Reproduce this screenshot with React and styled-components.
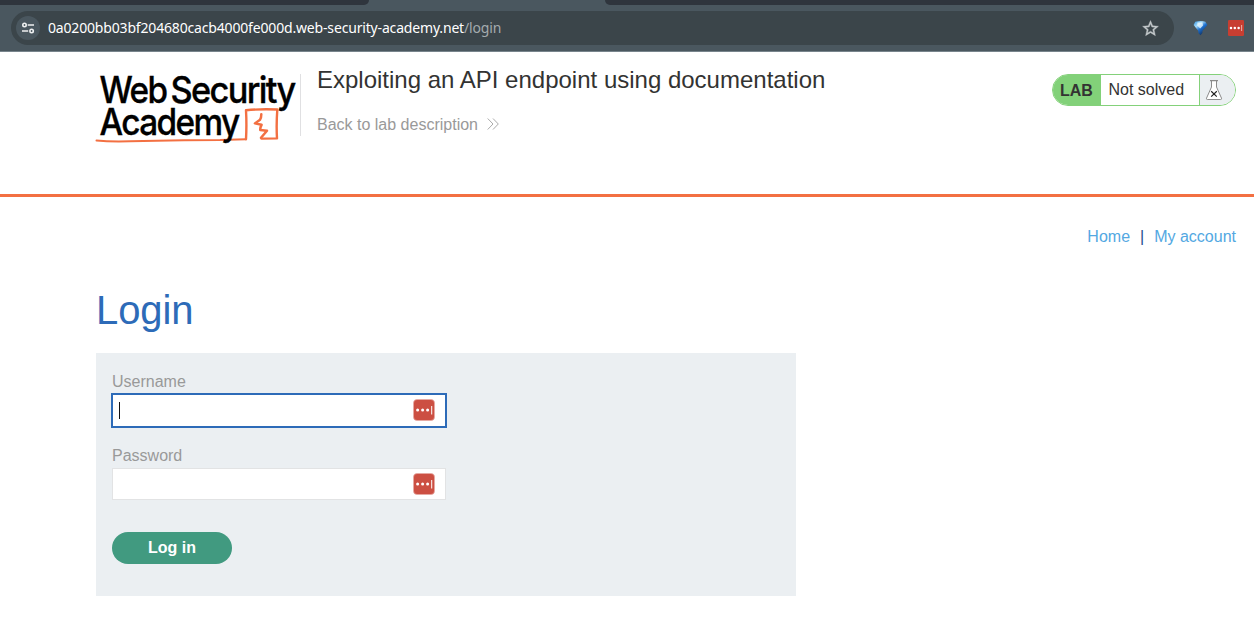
import React from 'react';
import styled, { createGlobalStyle } from 'styled-components';

const Global = createGlobalStyle`
  * { box-sizing: border-box; }
  body { margin: 0; background: #fff; font: 16px/20px "Liberation Sans", Arial, sans-serif; color: #333332; overflow: hidden; }
  a { text-decoration: none; }
  svg { display: block; flex: none; }
`;

const Browser = styled.header`
  height: 52px;
  background: #4a575f;
  border-bottom: 1px solid #78858c;
`;
const TabStrip = styled.div`
  height: 5px;
  display: flex;
  justify-content: space-between;
`;
const InactiveTabs = styled.div`
  width: ${p => p.$width}px;
  background: #2f353d;
  border-radius: ${p => (p.$side === 'left' ? '0 0 9px 0' : '0 0 0 9px')};
`;
const Toolbar = styled.div`
  display: flex;
  align-items: center;
  padding: 6px 10px 0 11px;
`;
const AddressBar = styled.div`
  width: 1163px;
  height: 34px;
  border-radius: 17px;
  background: #3b454a;
  display: flex;
  align-items: center;
  padding: 0 14.5px 0 5px;
`;
const SiteInfo = styled.span`
  width: 24px;
  height: 24px;
  border-radius: 50%;
  background: #4a575f;
  display: grid;
  place-items: center;
`;
const Url = styled.span`
  flex: 1;
  margin-left: 8px;
  font: 14px/20px "Noto Sans", "Open Sans", sans-serif;
  letter-spacing: -0.17px;
  color: #fff;
  white-space: nowrap;
`;
const Path = styled.span`
  color: #a4abae;
`;
const Extensions = styled.div`
  display: flex;
  align-items: center;
  gap: 20px;
  margin-left: 19px;
`;

const LabHeader = styled.section`
  height: 145px;
  border-bottom: 3px solid #f37042;
  display: flex;
  align-items: flex-start;
  padding: 0 18px 0 94px;
`;
const LogoBox = styled.div`
  width: 207px;
  height: 62px;
  margin-top: 22px;
  border-right: 1px solid #e0e0e2;
`;
const LogoSvg = styled.svg`
  margin-top: -14px;
  overflow: visible;
  font: 500 37px Inter, sans-serif;
  letter-spacing: -1.8px;
`;
const Title = styled.div`
  flex: 1;
  padding: 12px 0 0 16px;
`;
const LabTitle = styled.h2`
  margin: 0;
  font-size: 24px;
  line-height: 32px;
  font-weight: 400;
`;
const BackLink = styled.a`
  display: flex;
  align-items: flex-start;
  gap: 9px;
  margin-top: 19px;
  color: #999;
`;
const ChevronSvg = styled.svg`
  margin-top: 3px;
`;
const Status = styled.div`
  width: 184px;
  height: 32px;
  margin-top: 22px;
  border: 1px solid #84d17a;
  border-radius: 16px;
  overflow: hidden;
  display: flex;
  line-height: 30px;
`;
const StatusTag = styled.b`
  width: 48px;
  padding: 1px 0 0 7px;
  background: #82d179;
`;
const StatusText = styled.span`
  flex: 1;
  padding-left: 7.5px;
`;
const StatusIcon = styled.span`
  width: 36px;
  padding: 5px 0 0 5px;
  background: #ebeff2;
  border-left: 1px solid #84d17a;
`;

const Nav = styled.nav`
  display: flex;
  justify-content: flex-end;
  gap: 10px;
  padding: 30px 18px 0;
`;
const NavLink = styled.a`
  color: #53a8e2;
`;
const Separator = styled.span`
  color: #274f8c;
`;
const Main = styled.main`
  padding: 39px 96px 0;
`;
const Heading = styled.h1`
  margin: 0;
  color: #2d6bb8;
  font-size: 40px;
  line-height: 48px;
  font-weight: 400;
  letter-spacing: -0.1px;
`;
const Form = styled.form`
  width: 700px;
  height: 243px;
  margin-top: 19px;
  padding: 19px 16px 0;
  background: #ebeff2;
`;
const Field = styled.div`
  height: 74px;
  color: #999;
`;
const Label = styled.label`
  display: block;
  height: 22px;
`;
const Input = styled.div`
  width: 334px;
  height: ${p => (p.$focused ? 33 : 32)}px;
  background: #fff;
  border: 1px solid ${p => (p.$focused ? '#2d6bb8' : '#e2e3e4')};
  box-shadow: ${p => (p.$focused ? '0 0 0 1px #2d6bb8' : 'none')};
  display: flex;
  align-items: flex-start;
  justify-content: space-between;
  padding: 4px 10px 0 6px;
`;
const Caret = styled.i`
  width: 1px;
  height: 17px;
  margin-top: 3px;
  background: #111;
  visibility: ${p => (p.$visible ? 'visible' : 'hidden')};
`;
const Submit = styled.button`
  display: block;
  width: 120px;
  height: 32px;
  margin-top: 12px;
  padding: 0;
  border: 0;
  border-radius: 16px;
  background: #419a80;
  color: #fff;
  font: bold 16px/32px "Liberation Sans", Arial, sans-serif;
`;

const TuneIcon = () => (
  <svg width="14" height="14" viewBox="0 0 14 14" fill="none" stroke="#eef0f1" strokeWidth="1.6">
    <circle cx="3.5" cy="4" r="1.7" />
    <path d="M6.7 4H13M1 10h6.2" />
    <circle cx="10.6" cy="10" r="1.7" />
  </svg>
);

const StarIcon = () => (
  <svg width="19" height="19" viewBox="0 0 24 24" fill="#c3c8ca" stroke="#c3c8ca" strokeWidth=".5">
    <path d="M22 9.24l-7.19-.62L12 2 9.19 8.63 2 9.24l5.46 4.73L5.82 21 12 17.27 18.18 21l-1.63-7.03L22 9.24zM12 15.4l-3.76 2.27 1-4.28-3.32-2.88 4.38-.38L12 6.1l1.71 4.04 4.38.38-3.32 2.88 1 4.28L12 15.4z" />
  </svg>
);

const GemIcon = () => (
  <svg width="15" height="16" viewBox="0 0 15 16">
    <defs>
      <linearGradient id="gem" x1=".2" y1="0" x2=".8" y2=".8">
        <stop offset="0" stopColor="#4fa5e8" />
        <stop offset=".3" stopColor="#a9ddfb" />
        <stop offset=".6" stopColor="#1c6fce" />
        <stop offset="1" stopColor="#123567" />
      </linearGradient>
    </defs>
    <path d="M2.2 1.8Q7.5 .2 12.4 1.8L14.4 5 9.4 11v2L7.4 15.3l-2-2.3v-2L.6 5Z" fill="url(#gem)" />
    <path d="M4.5 2.6h5L10 5.6 7.2 8.6 4.2 5.6Z" fill="#eefaff" opacity=".75" />
  </svg>
);

const PassIcon = ({ toolbar }) =>
  toolbar ? (
    <svg width="16" height="16" viewBox="0 0 16 16">
      <rect width="16" height="16" rx="1.3" fill="#c83e31" />
      <g fill="#fff">
        <circle cx="3" cy="8" r="1.25" />
        <circle cx="6.8" cy="8" r="1.25" />
        <circle cx="10.6" cy="8" r="1.25" />
        <path d="M13.3 5h.8v6h-.8z" opacity=".75" />
      </g>
    </svg>
  ) : (
    <svg width="22" height="22" viewBox="0 0 22 22">
      <rect x=".5" y=".5" width="21" height="21" rx="3.5" fill="#cc4f42" stroke="#e7aaa4" strokeWidth=".7" />
      <g fill="#fff">
        <circle cx="4.6" cy="11" r="1.5" />
        <circle cx="9.6" cy="11" r="1.5" />
        <circle cx="14.6" cy="11" r="1.5" />
        <path d="M18.2 7h1v8.5h-1z" />
      </g>
    </svg>
  );

const Logo = () => (
  <LogoSvg width="205" height="88" viewBox="94 60 205 88" fill="#000" stroke="#000" strokeWidth=".35">
    <text x="99.5" y="103" textLength="67" lengthAdjust="spacingAndGlyphs">Web</text>
    <text x="170.5" y="103" textLength="124" lengthAdjust="spacingAndGlyphs">Security</text>
    <g fill="none" stroke="#f37042" strokeLinejoin="round" strokeLinecap="round">
      <path d="M96.5 140.6Q110 141.8 130 141.3L170 140.4Q200 140 220 140L246 139.2" strokeWidth="2" />
      <path d="M246 139.2Q246.8 125 246 110.3Q260 108.7 277.3 109.5Q276.2 125 277 138.4L261.5 138.6" strokeWidth="2.4" />
      <path d="M261.3 114.2Q261.3 118 260 119.8L254.9 123.4L261.6 124.8Q260 127.5 260.3 130L267 130.8L261 137.8" strokeWidth="2.5" />
    </g>
    <text x="99.5" y="135.3" textLength="139" lengthAdjust="spacingAndGlyphs">Academy</text>
  </LogoSvg>
);

const Chevrons = () => (
  <ChevronSvg width="12" height="12" viewBox="0 0 12 12" fill="none" stroke="#aaa" strokeWidth="1">
    <path d="M.7.5 6 6 .7 11.5M6 .5 11.3 6 6 11.5" />
  </ChevronSvg>
);

const Flask = () => (
  <svg width="18" height="21" viewBox="0 0 18 21" fill="none">
    <path d="M6.5 1v6L1.5 18.2q-.3 1.3.8 1.3h13.4q1.1 0 .8-1.3L11.5 7V1" fill="#fff" stroke="#8c8c8c" />
    <path d="M5 .7h8" stroke="#8c8c8c" strokeWidth="1.2" />
    <path d="m6.2 11.2 5.6 5.4m0-5.4-5.6 5.4" stroke="#222" strokeWidth="1.2" />
  </svg>
);

export default function App() {
  return (
    <>
      <Global />
      <Browser>
        <TabStrip>
          <InactiveTabs $width={369} $side="left" />
          <InactiveTabs $width={649} $side="right" />
        </TabStrip>
        <Toolbar>
          <AddressBar>
            <SiteInfo><TuneIcon /></SiteInfo>
            <Url>0a0200bb03bf204680cacb4000fe000d.web-security-academy.net<Path>/login</Path></Url>
            <StarIcon />
          </AddressBar>
          <Extensions>
            <GemIcon />
            <PassIcon toolbar />
          </Extensions>
        </Toolbar>
      </Browser>
      <LabHeader>
        <LogoBox><Logo /></LogoBox>
        <Title>
          <LabTitle>Exploiting an API endpoint using documentation</LabTitle>
          <BackLink>Back to lab description <Chevrons /></BackLink>
        </Title>
        <Status>
          <StatusTag>LAB</StatusTag>
          <StatusText>Not solved</StatusText>
          <StatusIcon><Flask /></StatusIcon>
        </Status>
      </LabHeader>
      <Nav>
        <NavLink>Home</NavLink>
        <Separator>|</Separator>
        <NavLink>My account</NavLink>
      </Nav>
      <Main>
        <Heading>Login</Heading>
        <Form>
          <Field>
            <Label>Username</Label>
            <Input $focused><Caret $visible /><PassIcon /></Input>
          </Field>
          <Field>
            <Label>Password</Label>
            <Input><Caret /><PassIcon /></Input>
          </Field>
          <Submit type="button">Log in</Submit>
        </Form>
      </Main>
    </>
  );
}
